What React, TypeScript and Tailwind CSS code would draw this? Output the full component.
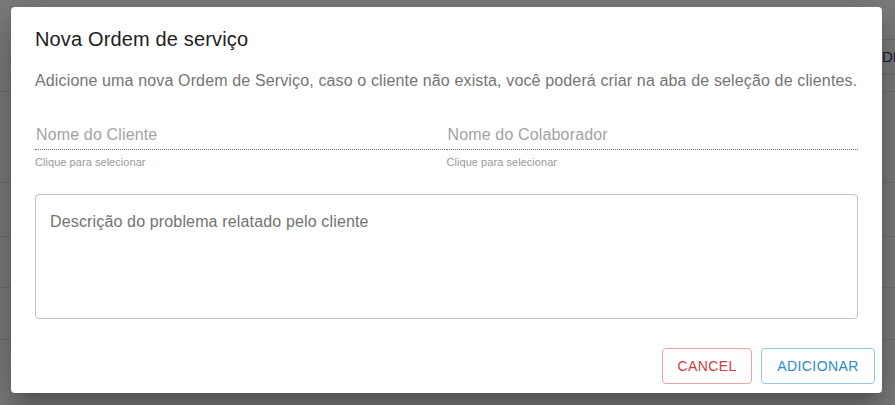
import React from "react";

function BehindPage() {
  // página por trás do diálogo (tabela com linhas)
  return (
    <div className="h-full w-full bg-[#f6f6f6]">
      <div className="h-[39px]" />
      <div className="flex h-[36px] justify-end">
        <div className="flex w-[16px] items-center border-y border-l border-[#d8d8d8] pl-[2px] text-[15px] text-[#2c3a8c]">
          DE
        </div>
      </div>
      <div className="h-[17px] border-b border-[#dcdcdc]" />
      <div className="h-[91px] border-b border-[#dcdcdc]" />
      <div className="h-[54px] border-b border-[#dcdcdc]" />
      <div className="h-[51px] border-b border-[#dcdcdc]" />
      <div className="h-[52px] border-b border-[#dcdcdc]" />
    </div>
  );
}

function Field({ label }: { label: string }) {
  return (
    <div>
      <div className="border-b border-dotted border-[#7a7a7a] pb-[2px]">
        <span className="block pl-px text-[16px] leading-[24px] tracking-[0.15px] text-[#a3a3a3]">{label}</span>
      </div>
      <p className="mt-[6px] text-[11px] leading-[13px] tracking-[0.05px] text-[#9a9a9a]">
        Clique para selecionar
      </p>
    </div>
  );
}

export default function App() {
  return (
    <div className="relative h-[405px] w-full overflow-hidden font-['Liberation_Sans','Roboto',sans-serif]">
      <BehindPage />

      {/* Backdrop + diálogo */}
      <div className="absolute inset-0 flex items-start bg-black/50 pt-[7px] pl-[11px]">
        <div className="flex w-[871px] flex-col rounded-[4px] bg-white shadow-[0px_11px_15px_-7px_rgba(0,0,0,0.2),0px_24px_38px_3px_rgba(0,0,0,0.14),0px_9px_46px_8px_rgba(0,0,0,0.12)]">
          <h2 className="px-6 pt-4 text-[20px] leading-[32px] tracking-[0.15px] text-[#212121]">
            Nova Ordem de serviço
          </h2>

          <div className="mt-[14px] px-6">
            <p className="whitespace-nowrap text-[16px] leading-[24px] tracking-[0.14px] text-[#757575]">
              Adicione uma nova Ordem de Serviço, caso o cliente não exista, você poderá criar na aba de seleção de clientes.
            </p>

            <div className="mt-[30px] grid grid-cols-2">
              <Field label="Nome do Cliente" />
              <Field label="Nome do Colaborador" />
            </div>

            <div className="mt-[25px] h-[125px] rounded-[4px] border border-[#c4c4c4] px-[14px] pt-[17px]">
              <span className="block text-[16px] leading-[19px] tracking-[0.15px] text-[#737373]">
                Descrição do problema relatado pelo cliente
              </span>
            </div>
          </div>

          <div className="mt-[21px] flex justify-end gap-[9px] pt-2 pr-[7px] pb-[9px]">
            <button className="h-[36px] w-[90px] rounded-[4px] border border-[#eba3a3] text-[14px] uppercase tracking-[0.4px] text-[#d23c3c]">
              Cancel
            </button>
            <button className="h-[36px] w-[114px] rounded-[4px] border border-[#8ecae8] text-[14px] uppercase tracking-[0.4px] text-[#2a8ccf]">
              Adicionar
            </button>
          </div>
        </div>
      </div>
    </div>
  );
}
